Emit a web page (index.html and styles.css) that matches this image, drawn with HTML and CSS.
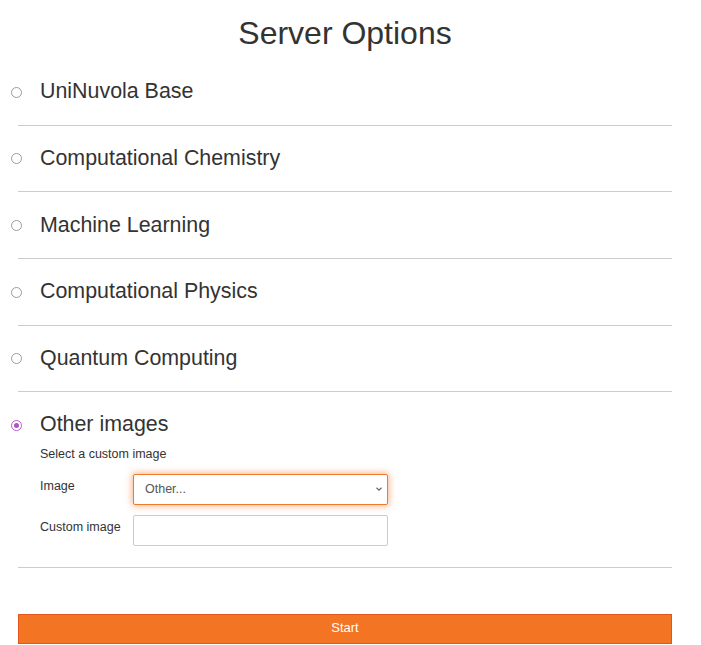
FILE: index.html
```html
<!DOCTYPE html>
<html lang="en">
<head>
<meta charset="utf-8">
<title>Server Options</title>
<link rel="stylesheet" href="styles.css">
</head>
<body>
<div class="page">
  <h1 class="title">Server Options</h1>
  <div class="options">
    <div class="option">
      <span class="radio"></span>
      <div class="option-body"><div class="option-label">UniNuvola Base</div></div>
    </div>
    <div class="option">
      <span class="radio"></span>
      <div class="option-body"><div class="option-label">Computational Chemistry</div></div>
    </div>
    <div class="option">
      <span class="radio"></span>
      <div class="option-body"><div class="option-label">Machine Learning</div></div>
    </div>
    <div class="option">
      <span class="radio"></span>
      <div class="option-body"><div class="option-label">Computational Physics</div></div>
    </div>
    <div class="option">
      <span class="radio"></span>
      <div class="option-body"><div class="option-label">Quantum Computing</div></div>
    </div>
    <div class="option option-selected">
      <span class="radio radio-checked"><span class="radio-dot"></span></span>
      <div class="option-body">
        <div class="option-label">Other images</div>
        <div class="hint">Select a custom image</div>
        <div class="form">
          <div class="form-row">
            <label class="form-label">Image</label>
            <div class="select-wrap">
              <div class="select">Other...</div>
              <svg class="chevron" width="8" height="6" viewBox="0 0 8 6"><path d="M1.5 1.8 L4 4.2 L6.5 1.8" fill="none" stroke="#666" stroke-width="1.2"/></svg>
            </div>
          </div>
          <div class="form-row">
            <label class="form-label">Custom image</label>
            <div class="input"></div>
          </div>
        </div>
      </div>
    </div>
  </div>
  <button class="start">Start</button>
</div>
</body>
</html>
```

FILE: styles.css
```css
html, body {
  margin: 0;
  padding: 0;
  background: #fff;
}
body {
  font-family: "Liberation Sans", Arial, sans-serif;
  color: #333;
}
.page {
  margin: 0 29px 0 18px;
  padding-top: 15px;
  display: flex;
  flex-direction: column;
}
.title {
  margin: 0 0 8px;
  font-size: 32px;
  line-height: 36px;
  font-weight: normal;
  text-align: center;
  color: #333;
}
.options {
  display: flex;
  flex-direction: column;
}
.option {
  display: flex;
  align-items: flex-start;
  padding: 20.2px 0 21.47px;
  border-bottom: 1px solid #cccccc;
}
.option-selected {
  padding-bottom: 21px;
}
.radio {
  flex: none;
  box-sizing: border-box;
  width: 11px;
  height: 11px;
  margin: 7.6px 18.5px 0 -7.5px;
  border: 1px solid #9a9aa2;
  border-radius: 50%;
  background: #fff;
  display: flex;
  align-items: center;
  justify-content: center;
}
.radio-checked {
  border: 1.5px solid #b55fca;
}
.radio-dot {
  width: 5px;
  height: 5px;
  border-radius: 50%;
  background: #b152c8;
}
.option-body {
  flex: 1;
  display: flex;
  flex-direction: column;
}
.option-label {
  font-size: 21.4px;
  line-height: 24px;
  color: #333;
}
.hint {
  margin-top: 8.4px;
  font-size: 12.5px;
  line-height: 18px;
}
.form {
  margin-top: 11.4px;
  display: flex;
  flex-direction: column;
  gap: 10px;
}
.form-row {
  display: flex;
  align-items: flex-start;
}
.form-label {
  width: 93px;
  flex: none;
  padding-top: 2.6px;
  font-size: 12.5px;
  line-height: 18px;
}
.select-wrap {
  position: relative;
  width: 255px;
}
.select {
  box-sizing: border-box;
  height: 31px;
  padding: 0 11px;
  border: 1px solid #f0792e;
  border-radius: 2px;
  box-shadow: 0 0 7px 1px rgba(243, 117, 36, 0.55);
  font-size: 12.5px;
  line-height: 29px;
  color: #555;
  background: #fff;
}
.chevron {
  position: absolute;
  right: 5px;
  top: 12px;
}
.input {
  box-sizing: border-box;
  width: 255px;
  height: 31px;
  border: 1px solid #cccccc;
  border-radius: 2px;
  background: #fff;
}
.start {
  margin-top: 46px;
  box-sizing: border-box;
  height: 30px;
  width: 100%;
  padding: 0 0 2px;
  border: 1px solid #e3571c;
  border-radius: 0;
  background: #f37524;
  color: #fff;
  font-family: "Liberation Sans", Arial, sans-serif;
  font-size: 13px;
  line-height: 26px;
}
```
